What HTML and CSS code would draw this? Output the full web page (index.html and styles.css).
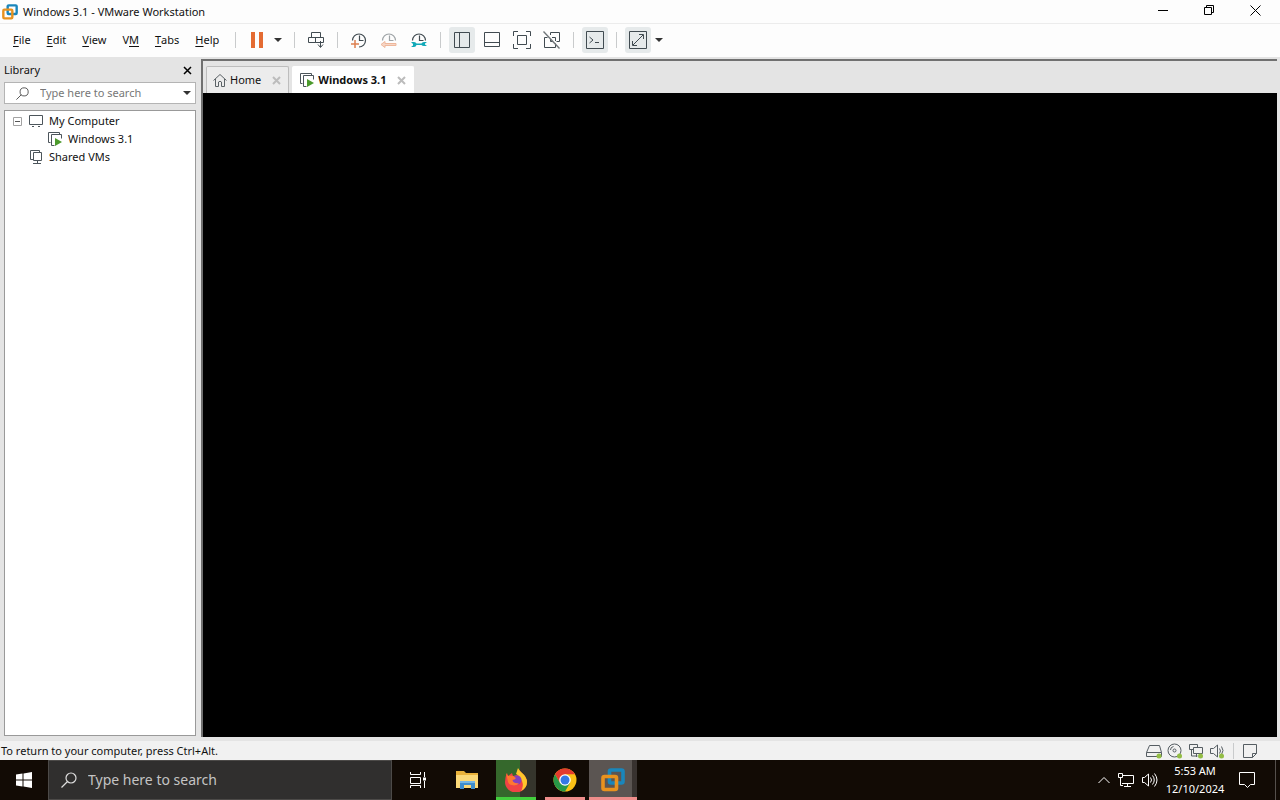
FILE: index.html
```html
<!DOCTYPE html>
<html lang="en">

<head>
    <meta charset="UTF-8">
    <meta name="viewport" content="width=device-width, initial-scale=1.0">
    <title>Windows 3.1 - VMware Workstation</title>
    <link rel="stylesheet" href="styles.css">
</head>

<body>
    <!-- Shared icons -->
    <svg class="defs" aria-hidden="true">
        <symbol id="vmware" viewBox="0 0 24 24">
            <rect x="8.500" y="2" width="13.500" height="13" rx="1.500" fill="none" stroke="#1a86bb" stroke-width="3.600" />
            <rect x="2" y="8.500" width="13.500" height="13" rx="1.500" fill="none" stroke="#e8921e" stroke-width="3.600" />
        </symbol>
        <symbol id="vm-running" viewBox="0 0 16 16">
            <path d="M3.500 11.500h-2v-10h11v2M7.500 14.500h-3v-11h10v4" fill="none" stroke="#4c555b" />
            <path d="M8 7l7 4-7 4z" fill="#4b9a2c" />
        </symbol>
        <symbol id="search" viewBox="0 0 16 16">
            <circle cx="10" cy="6" r="5" fill="none" stroke="currentColor" stroke-width="1.200" />
            <path d="M6.500 9.500L.5 15.500" fill="none" stroke="currentColor" stroke-width="1.200" />
        </symbol>
        <symbol id="half-clock" viewBox="0 0 18 18">
            <path d="M2.500 9.500a6.500 6.500 0 0 1 13 0M9.500 4.500v5h4" fill="none" stroke="currentColor" stroke-width="1.200" />
        </symbol>
    </svg>

    <header class="titlebar">
        <svg class="app-icon"><use href="#vmware" /></svg>
        <h1>Windows 3.1 - VMware Workstation</h1>
        <div class="window-buttons">
            <button aria-label="Minimize"><svg width="11" height="11"><path d="M0 5.500h10" /></svg></button>
            <button aria-label="Restore"><svg width="11" height="11"><path d="M.5 2.500h7v7h-7zM2.500 2.500v-2h7v7h-2" /></svg></button>
            <button aria-label="Close"><svg width="11" height="11"><path d="M.5.5l10 10M10.500.5l-10 10" /></svg></button>
        </div>
    </header>

    <div class="toolbar">
        <nav class="menu">
            <button><u>F</u>ile</button>
            <button><u>E</u>dit</button>
            <button><u>V</u>iew</button>
            <button>V<u>M</u></button>
            <button><u>T</u>abs</button>
            <button><u>H</u>elp</button>
        </nav>
        <span class="separator"></span>
        <button class="tool" aria-label="Suspend"><svg viewBox="0 0 18 18"><path d="M3 1h4v16H3zM11 1h4v16h-4z" fill="#e46b32" stroke="none" /></svg></button>
        <button class="caret" aria-label="Power options"></button>
        <span class="separator"></span>
        <button class="tool" aria-label="Send Ctrl+Alt+Del"><svg viewBox="0 0 18 18"><path d="M4.500 1.500h9v5h-9zM1.500 6.500h7v5h-7zM8.500 6.500h8v5h-8zM13.500 10v6M11 13.500l2.500 3 2.500-3" /></svg></button>
        <span class="separator"></span>
        <div class="tool-group">
            <button class="tool" aria-label="Take snapshot"><svg viewBox="0 0 18 18"><path d="M2.500 9.500A6.500 6.500 0 1 1 9 16M9.500 4.500v5h4" stroke-width="1.200" /><path d="M5 9v8M1 13h8" stroke="#dd8050" stroke-width="1.500" /></svg></button>
            <button class="tool faded" aria-label="Revert to snapshot"><svg viewBox="0 0 18 18"><use href="#half-clock" /><path d="M5 10.500l-4 3 4 3v-2h11v-2H5z" stroke="#e0733c" fill="#f0b090" /></svg></button>
            <button class="tool" aria-label="Manage snapshots"><svg viewBox="0 0 18 18"><use href="#half-clock" /><path d="M1 11h3q2 0 2.500 1.500h5Q12 11 14 11h3l-2 1.500v1l2 1.500h-3q-2 0-2.500-1h-5Q6 16 4 16H1l2-1.500v-1.500z" fill="#12a9b8" stroke="none" /></svg></button>
        </div>
        <span class="separator"></span>
        <div class="tool-group">
            <button class="tool pressed" aria-label="Show library"><svg viewBox="0 0 18 18"><path d="M1.500 1.500h15v15h-15zM6.500 1.500v15" /></svg></button>
            <button class="tool" aria-label="Show thumbnail bar"><svg viewBox="0 0 18 18"><path d="M1.500 1.500h15v14h-15zM1.500 11.500h15" /></svg></button>
            <button class="tool" aria-label="Full screen"><svg viewBox="0 0 18 18"><path d="M.5 5V.5H5M13 .5h4.500V5M17.500 13v4.500H13M5 17.500H.5V13M4.500 4.500h9v9h-9z" /></svg></button>
            <button class="tool" aria-label="Unity"><svg viewBox="0 0 18 18"><path d="M7.500 4V1.500h9v9h-3M1.500 6.500v10h11v-4M1.500 6.500h3M9 6.500h3.500V10M7.500 8v2.500H10" /><path d="M.5 .5l16 17" stroke="#707679" stroke-width="1.400" /></svg></button>
        </div>
        <span class="separator"></span>
        <button class="tool pressed" aria-label="Console view"><svg viewBox="0 0 18 18"><path d="M.5 .5h17v17H.5zM3.500 6l3.500 3-3.500 3M9 11.500h4" /></svg></button>
        <span class="separator"></span>
        <button class="tool pressed" aria-label="Stretch guest"><svg viewBox="0 0 18 18"><path d="M.5 .5h17v17H.5zM4 14L14 4M10 3.500h4.500V8M8 14.500H3.500V10" /></svg></button>
        <button class="caret" aria-label="Stretch options"></button>
    </div>

    <div class="workspace">
        <aside class="library">
            <div class="library-header">
                <h2>Library</h2>
                <button aria-label="Close library"><svg width="9" height="9"><path d="M1 1l7 7M8 1L1 8" stroke="#000" stroke-width="1.500" /></svg></button>
            </div>
            <div class="library-search">
                <svg><use href="#search" /></svg>
                <input type="text" aria-label="Search library" placeholder="Type here to search">
                <button class="caret" aria-label="Search options"></button>
            </div>
            <ul class="tree">
                <li>
                    <button class="toggle" aria-label="Collapse"><svg width="9" height="9"><path d="M.5.5h8v8h-8z" fill="none" stroke="#a2a2a2" /><path d="M2 4.500h5" stroke="#555" /></svg></button>
                    <svg class="tree-icon" viewBox="0 0 16 16"><path d="M1.500 2.500h13v9h-13zM4 13.500h2M10 13.500h2" fill="none" stroke="#4c555b" /></svg>
                    <span>My Computer</span>
                </li>
                <li class="child">
                    <svg class="tree-icon"><use href="#vm-running" /></svg>
                    <span>Windows 3.1</span>
                </li>
                <li class="root">
                    <svg class="tree-icon" viewBox="0 0 16 16"><path d="M5 10.500H2.500v-9h9V3M5.500 3.500h8v8h-8zM9.500 12v2.500M5 14.500h8" fill="none" stroke="#4c555b" /></svg>
                    <span>Shared VMs</span>
                </li>
            </ul>
        </aside>

        <main class="console">
            <div class="tabs">
                <div class="tab">
                    <svg class="tab-icon" viewBox="0 0 14 16"><path d="M.5 8.500L7 2.500l6.500 6M2.500 7v7.500h3V10q1.500-1.500 3 0v4.500h3V7" fill="none" stroke="#5b6266" /></svg>
                    <span>Home</span>
                    <button aria-label="Close Home"><svg width="9" height="9"><path d="M1 1l7 7M8 1L1 8" /></svg></button>
                </div>
                <div class="tab active">
                    <svg class="tab-icon"><use href="#vm-running" /></svg>
                    <span>Windows 3.1</span>
                    <button aria-label="Close Windows 3.1"><svg width="9" height="9"><path d="M1 1l7 7M8 1L1 8" /></svg></button>
                </div>
            </div>
            <div class="screen"></div>
        </main>
    </div>

    <footer class="statusbar">
        <span>To return to your computer, press Ctrl+Alt.</span>
        <div class="devices">
            <svg viewBox="0 0 16 16"><path d="M.5 9.500l3-7h10l2 7v4H.5zM.5 9.500h15" /><circle cx="13" cy="13" r="2.500" class="led" /></svg>
            <svg viewBox="0 0 16 16"><circle cx="7.500" cy="7.500" r="6.500" /><circle cx="7.500" cy="7.500" r="1.500" /><path d="M3.500 7q0-3 3-3.500" /><circle cx="12.500" cy="13" r="2.500" class="led" /></svg>
            <svg viewBox="0 0 16 16"><path d="M6 6.500H1.500v-5h8v3M5.500 4.500h9v6h-9zM3.500 7v6h6M8.500 11v3" /><circle cx="12.500" cy="13" r="2.500" class="led" /></svg>
            <svg viewBox="0 0 16 16"><path d="M1.500 5.500h3l4-3.500v12l-4-3.500h-3zM10.500 5.500q2 2.500 0 5M12.500 3.500q3 4 0 8" /><circle cx="12.500" cy="13" r="2.500" class="led" /></svg>
            <span class="separator"></span>
            <svg viewBox="0 0 16 16"><path d="M1.500 1.500h13v9l-4 4h-9zM14.500 10.500h-4v4" /></svg>
        </div>
    </footer>

    <div class="taskbar">
        <button class="start" aria-label="Start"><svg width="16" height="16" viewBox="0 0 16 16"><path d="M0 2.500l6.500-1v6H0zM7.500 1.400L16 0v7.500H7.500zM0 8.500h6.500v6l-6.500-1zM7.500 8.500H16V16l-8.500-1.400z" fill="#fff" /></svg></button>
        <div class="taskbar-search">
            <svg><use href="#search" /></svg>
            <input type="text" aria-label="Search Windows" placeholder="Type here to search">
        </div>
        <div class="apps">
            <button class="app" aria-label="Task View"><svg width="18" height="18" viewBox="0 0 18 18"><path d="M1.500 1v2.500h10V1M1.500 6.500h10v6h-10zM1.500 17v-2.500h10V17M15.500 1v5M15.500 10v7" fill="none" stroke="#fff" /><path d="M14 6.500h3v3h-3z" fill="#fff" /></svg></button>
            <button class="app" aria-label="File Explorer"><svg width="24" height="24" viewBox="0 0 24 24"><path d="M1 3h8l2 2h12v15H1z" fill="#e9b23b" /><path d="M1 7h22v13H1z" fill="#fbd978" /><path d="M5 21v-8h15v8h-4v-4H9v4z" fill="#3e8dcc" /><path d="M5 13h15v2H5z" fill="#74b7e5" /></svg></button>
            <button class="app firefox" aria-label="Firefox"><svg width="24" height="24" viewBox="0 0 24 24"><path d="M3 5l1 3 4-3 1 3 4-1 1-6 4 4q5 4 5 9a11 10.500 0 0 1-22 0q0-5 2-9" fill="#f04345" /><path d="M14 0q1 2 3 4 6 5 6 10 0 6-6 9 3-5 1-10-3-6-6-7z" fill="#ffc62b" /><path d="M2 5l2 3q5-1 7 1l-2 3q2 3 6 2-2 4-7 3-3 0-4-3z" fill="#ff792c" /><circle cx="13" cy="12" r="4.500" fill="#8540bd" /><path d="M5 9q5-1 7 1-1 2-4 2 2 4 7 3-2 3-6 2-4-1-4-8" fill="#ff7631" /></svg></button>
            <button class="app chrome" aria-label="Chrome"><svg width="24" height="24" viewBox="0 0 24 24"><circle cx="12" cy="12" r="11.500" fill="#fbc116" /><path d="M2 6.300A11.500 11.500 0 0 1 22 6.300H12L7 15z" fill="#e33b2e" /><path d="M2 6.300A11.500 11.500 0 0 0 12 23.500l5-8.500-10 0z" fill="#279847" /><circle cx="12" cy="12" r="5.800" fill="#fff" /><circle cx="12" cy="12" r="4.500" fill="#3478e5" /></svg></button>
            <button class="app workstation" aria-label="VMware Workstation"><svg width="24" height="24"><use href="#vmware" /></svg></button>
        </div>
        <div class="tray">
            <button aria-label="Show hidden icons"><svg width="12" height="8"><path d="M.5 7L6 1.500 11.500 7" /></svg></button>
            <button aria-label="Network"><svg width="16" height="16"><path d="M4.500 3.500h11v8H4M9.500 12v3M6 14.500h7M.5 1.500h4v4h-4zM2.500 6v7.500H5" /></svg></button>
            <button aria-label="Volume"><svg width="16" height="16"><path d="M.5 5.500h2l4-3.500v12l-4-3.500h-2zM8.500 5.500q2 2.500 0 5M10.500 3.500q3.500 4.500 0 9M12.500 1.500q5 6.500 0 13" /></svg></button>
        </div>
        <div class="clock">
            <time>5:53 AM</time>
            <time>12/10/2024</time>
        </div>
        <button class="notifications" aria-label="Notifications"><svg width="18" height="18"><path d="M1.500 1.500h15v12h-4l-3 3-3-3h-5z" /></svg></button>
        <button class="show-desktop" aria-label="Show desktop"></button>
    </div>
</body>

</html>
```
FILE: styles.css
```css
* {
    box-sizing: border-box;
}

body {
    margin: 0;
    height: 100vh;
    display: flex;
    flex-direction: column;
    background-color: #fdfdfd;
    font-family: "Noto Sans", "Open Sans", sans-serif;
    font-size: 11px;
    line-height: 18px;
    color: #111;
}

button,
input {
    margin: 0;
    padding: 0;
    border: 0;
    background: none;
    font: inherit;
    color: inherit;
}

button {
    display: flex;
    align-items: center;
    justify-content: center;
}

h1,
h2 {
    margin: 0;
    font-size: 11px;
    font-weight: normal;
}

svg {
    flex: none;
}

.defs {
    position: absolute;
    width: 0;
    height: 0;
}

/* Title bar */
.titlebar {
    display: flex;
    align-items: center;
    flex: none;
    height: 24px;
    padding: 0 2px;
    border-bottom: 1px solid #ececec;
}

.app-icon {
    width: 16px;
    height: 16px;
    margin-right: 5px;
}

.window-buttons {
    display: flex;
    margin-left: auto;
    padding-bottom: 2px;
}

.window-buttons button {
    width: 46px;
    height: 20px;
}

.window-buttons svg {
    fill: none;
    stroke: #000;
}

/* Menu and toolbar */
.toolbar {
    display: flex;
    align-items: center;
    flex: none;
    height: 33px;
    padding-bottom: 2px;
}

.menu {
    display: flex;
    flex: 0 0 225px;
    padding-left: 5px;
}

.menu button {
    padding: 0 8px;
}

.menu u {
    text-underline-offset: 2px;
}

.separator {
    width: 1px;
    height: 16px;
    margin: 0 8px;
    background-color: #c9cbcc;
}

.tool-group {
    display: flex;
    gap: 4px;
}

.tool {
    width: 26px;
    height: 26px;
    border-radius: 3px;
}

.tool svg {
    width: 18px;
    height: 18px;
    fill: none;
    stroke: #414b51;
    color: #414b51;
}

.pressed {
    background-color: #e6eaeb;
}

.faded {
    opacity: 0.5;
}

.caret {
    width: 16px;
    height: 18px;
}

.caret::before {
    content: "";
    border: 4px solid transparent;
    border-top-color: #333;
    border-bottom: 0;
}

/* Library */
.workspace {
    display: flex;
    flex: 1;
    min-height: 0;
    padding-bottom: 4px;
    background-color: #e4e4e4;
}

.library {
    display: flex;
    flex-direction: column;
    width: 201px;
    padding: 4px 5px 1px 4px;
}

.library-header {
    display: flex;
    align-items: center;
    justify-content: space-between;
    padding-right: 4px;
}

.library-search {
    display: flex;
    align-items: center;
    height: 22px;
    margin: 3px 0 6px;
    padding-left: 11px;
    border: 1px solid #b4b4b4;
    background-color: #fff;
}

.library-search svg {
    width: 13px;
    height: 13px;
    color: #555;
}

.library-search input {
    flex: 1;
    min-width: 0;
    padding-left: 11px;
}

.library-search input::placeholder {
    color: #777;
}

.tree {
    flex: 1;
    margin: 0;
    padding: 1px 0;
    border: 1px solid #999;
    background-color: #fff;
    list-style: none;
}

.tree li {
    display: flex;
    align-items: center;
    height: 18px;
    padding-left: 8px;
}

.tree .root {
    padding-left: 23px;
}

.tree .child {
    padding-left: 42px;
}

.toggle {
    width: 9px;
    margin-right: 6px;
}

.tree-icon {
    width: 16px;
    height: 16px;
    margin-right: 5px;
}

/* Console */
.console {
    display: flex;
    flex-direction: column;
    flex: 1;
    min-width: 0;
    margin: 2px 3px 0 0;
    border-top: 2px solid #707070;
    border-left: 2px solid #707070;
}

.tabs {
    display: flex;
    align-items: flex-end;
    gap: 3px;
    flex: none;
    height: 32px;
    padding-left: 3px;
}

.tab {
    display: flex;
    align-items: center;
    height: 27px;
    padding: 0 7px 0 6px;
    border: 1px solid #bdbdbd;
    border-bottom: 0;
    border-radius: 2px 2px 0 0;
    background-color: #ececec;
}

.tab button {
    margin-left: 11px;
}

.tab button svg {
    stroke: #bcbcbc;
    stroke-width: 2;
}

.tab-icon {
    width: 14px;
    height: 16px;
    margin-right: 3px;
}

.tab.active {
    border-color: #fff;
    background-color: #fff;
    font-weight: bold;
}

.active .tab-icon {
    width: 16px;
}

.screen {
    flex: 1;
    background-color: #000;
}

/* Status bar */
.statusbar {
    display: flex;
    align-items: center;
    justify-content: space-between;
    flex: none;
    height: 19px;
    padding: 0 22px 0 1px;
    background-color: #f1f1f1;
}

.devices {
    display: flex;
    align-items: center;
    gap: 5px;
}

.devices svg {
    width: 16px;
    height: 16px;
    fill: none;
    stroke: #555d62;
}

.devices .led {
    fill: #93bd45;
    stroke: none;
}

.devices .separator {
    margin: 0 3px;
}

/* Taskbar */
.taskbar {
    display: flex;
    align-items: center;
    flex: none;
    height: 40px;
    background-color: #120b05;
    color: #fff;
}

.start {
    width: 48px;
    height: 40px;
}

.taskbar-search {
    display: flex;
    align-items: center;
    width: 344px;
    height: 40px;
    padding-left: 12px;
    border: 1px solid #4c4a48;
    background-color: #302f2e;
    font-size: 14px;
}

.taskbar-search svg {
    width: 16px;
    height: 16px;
    color: #ddd;
}

.taskbar-search input {
    flex: 1;
    min-width: 0;
    padding-left: 11px;
}

.taskbar-search input::placeholder {
    color: #c4c4c4;
}

.apps {
    display: flex;
    padding-left: 1px;
}

.app {
    width: 49px;
    height: 40px;
    border: solid transparent;
    border-width: 3px 0;
}

.firefox,
.chrome {
    width: 40px;
    margin: 0 4px 0 5px;
}

.firefox {
    border-bottom-color: #43cf3d;
    background: linear-gradient(90deg, #35682c 60%, #35352c 60%) border-box;
}

.chrome {
    border-bottom-color: #ee8d8b;
}

.workstation {
    width: 48px;
    border-bottom-color: #ee8d8b;
    background: linear-gradient(90deg, #5b5552 90%, #38322f 90%) border-box;
}

.tray {
    display: flex;
    gap: 8px;
    margin-left: auto;
}

.tray svg,
.notifications svg {
    fill: none;
    stroke: #fff;
}

.taskbar .clock {
    display: flex;
    flex-direction: column;
    width: 74px;
    text-align: center;
}

.notifications {
    width: 30px;
    height: 40px;
}

.show-desktop {
    width: 5px;
    height: 40px;
    margin-left: 13px;
    border-left: 1px solid #55504c;
}
```
